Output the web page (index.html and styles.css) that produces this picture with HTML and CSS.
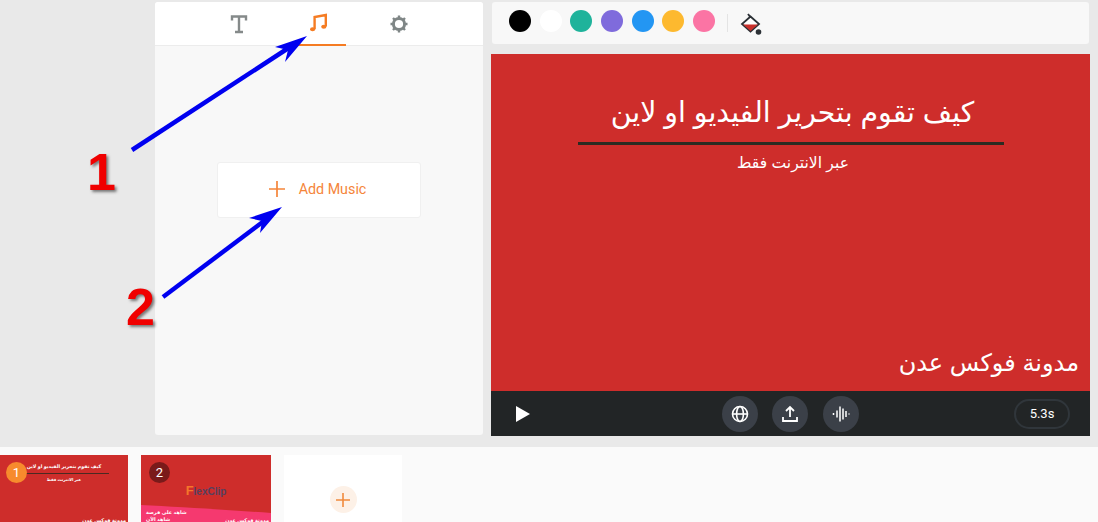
FILE: index.html
```html
<!DOCTYPE html>
<html lang="ar">
<head>
    <meta charset="UTF-8">
    <title>Add Music</title>
    <link rel="stylesheet" href="styles.css">
</head>
<body>
    <div class="app">
        <div class="main">
            <div class="panel">
                <div class="tabs">
                    <div class="tab">
                        <svg width="18" height="20" viewBox="0 0 18 20" fill="none" stroke="#858a8a" stroke-width="2.4"><path d="M2 6.5V2.5H16V6.5M9 2.5V18M5 18H13"/></svg>
                    </div>
                    <div class="tab active">
                        <svg width="20" height="20" viewBox="0 0 20 20" fill="none" stroke="#f57c23" stroke-width="2.4"><path d="M5.6 16V4L16.8 2V13.5"/><ellipse cx="3.6" cy="16.2" rx="2.6" ry="2" fill="#f57c23" stroke="none"/><ellipse cx="14.8" cy="13.8" rx="2.6" ry="2" fill="#f57c23" stroke="none"/></svg>
                    </div>
                    <div class="tab">
                        <svg width="20" height="20" viewBox="0 0 20 20" fill="none" stroke="#7f8686"><circle cx="10" cy="10" r="5.6" stroke-width="3"/><path d="M10 1.5V4M10 16V18.5M1.5 10H4M16 10H18.5M4 4L5.8 5.8M14.2 14.2L16 16M4 16L5.8 14.2M14.2 5.8L16 4" stroke-width="2.4"/></svg>
                    </div>
                </div>
                <div class="panel-body">
                    <div class="add-music">
                        <svg width="16" height="16" viewBox="0 0 16 16" stroke="#f5853a" stroke-width="1.7"><path d="M8 0V16M0 8H16"/></svg>
                        <span>Add Music</span>
                    </div>
                </div>
            </div>
            <div class="editor">
                <div class="toolbar">
                    <span class="swatch black"></span>
                    <span class="swatch white"></span>
                    <span class="swatch teal"></span>
                    <span class="swatch purple"></span>
                    <span class="swatch blue"></span>
                    <span class="swatch amber"></span>
                    <span class="swatch pink"></span>
                    <span class="divider"></span>
                    <svg class="bucket" width="22" height="24" viewBox="0 0 22 24"><path d="M8 2L11 6" stroke="#2c3136" stroke-width="1.8"/><path d="M10.5 4.5L19 12L10.5 19.5L2 12Z" fill="#fff" stroke="#2c3136" stroke-width="1.8"/><path d="M3 12.5H18L10.5 19Z" fill="#c9302c"/><circle cx="18.5" cy="20" r="2.8" fill="#2c3136"/></svg>
                </div>
                <div class="slide">
                    <div class="slide-title">كيف تقوم بتحرير الفيديو او لاين</div>
                    <div class="slide-line"></div>
                    <div class="slide-sub">عبر الانترنت فقط</div>
                    <div class="slide-foot">مدونة فوكس عدن</div>
                </div>
                <div class="controls">
                    <svg class="play" width="14" height="16" viewBox="0 0 14 16"><path d="M0 0L14 8L0 16Z" fill="#fff"/></svg>
                    <div class="round-btns">
                        <span class="round">
                            <svg width="18" height="18" viewBox="0 0 18 18" fill="none" stroke="#fff" stroke-width="1.6"><circle cx="9" cy="9" r="7.5"/><ellipse cx="9" cy="9" rx="3.4" ry="7.5"/><path d="M1.5 9H16.5"/></svg>
                        </span>
                        <span class="round">
                            <svg width="18" height="18" viewBox="0 0 18 18" fill="none" stroke="#fff" stroke-width="1.8"><path d="M9 12V2M5 6L9 2L13 6M2 12V16H16V12"/></svg>
                        </span>
                        <span class="round">
                            <svg width="18" height="18" viewBox="0 0 18 18" fill="none" stroke="#fff" stroke-width="1.5"><path d="M1.5 8V10M5 5.5V12.5M8 1.5V16.5M11 3.5V14.5M14 6V12M17 8.5V9.5"/></svg>
                        </span>
                    </div>
                    <span class="time">5.3s</span>
                </div>
            </div>
        </div>
        <div class="strip">
            <div class="thumb">
                <span class="badge orange">1</span>
                <div class="thumb-title">كيف تقوم بتحرير الفيديو او لاين</div>
                <div class="thumb-line"></div>
                <div class="thumb-sub">عبر الانترنت فقط</div>
                <div class="thumb-foot">مدونة فوكس عدن</div>
            </div>
            <div class="thumb second">
                <span class="badge dark">2</span>
                <div class="logo"><b>F</b>lexClip</div>
                <svg class="wave" width="130" height="17" viewBox="0 0 130 17"><path d="M0 0C40 2 90 5 130 8V17H0Z" fill="#f5396f"/></svg>
                <div class="wave-text">شاهد على فرصة<br>شاهد الآن</div>
                <div class="thumb-foot">مدونة فوكس عدن</div>
            </div>
            <div class="thumb add">
                <span class="add-circle">
                    <svg width="16" height="16" viewBox="0 0 16 16" stroke="#f08a3e" stroke-width="1.6"><path d="M8 1V15M1 8H15"/></svg>
                </span>
            </div>
        </div>

        <svg class="arrows" width="1098" height="522" viewBox="0 0 1098 522">
            <path d="M132 150L290 47" stroke="#0000f0" stroke-width="4.5" fill="none"/>
            <path d="M307 36L275 47L288 50L285 62Z" fill="#0000f0"/>
            <path d="M163 297L268 218" stroke="#0000f0" stroke-width="4.5" fill="none"/>
            <path d="M282 207L249 218L262 221L260 233Z" fill="#0000f0"/>
        </svg>
        <span class="num one">1</span>
        <span class="num two">2</span>
    </div>
</body>
</html>
```

FILE: styles.css
```css
*{
    box-sizing: border-box;
    margin: 0;
    padding: 0;
}
body{
    background-color: #e9e9e9;
    font-family: Roboto, "Liberation Sans", sans-serif;
}
.app{
    position: relative;
    width: 1098px;
    height: 522px;
    overflow: hidden;
}
.main{
    display: flex;
    gap: 8px;
    height: 447px;
    padding: 2px 0 0 155px;
}

/* left panel */
.panel{
    width: 328px;
    height: 433px;
    background-color: #f8f8f8;
    border-radius: 3px;
    display: flex;
    flex-direction: column;
}
.tabs{
    height: 44px;
    background-color: #fff;
    border-bottom: 1px solid #ececec;
    border-radius: 3px 3px 0 0;
    display: flex;
    justify-content: center;
    gap: 26px;
}
.tab{
    width: 54px;
    height: 44px;
    display: flex;
    align-items: center;
    justify-content: center;
}
.tab.active{
    border-bottom: 2px solid #f57c23;
}
.panel-body{
    flex: 1;
    padding-top: 116px;
}
.add-music{
    width: 204px;
    height: 56px;
    margin: auto;
    padding: 0 0 2px;
    background-color: #fff;
    border: 1px solid #f0f0f0;
    border-radius: 3px;
    display: flex;
    align-items: center;
    justify-content: center;
    gap: 14px;
    color: #f5853a;
    font-size: 14.3px;
}
.add-music svg{
    margin-left: -3px;
}

/* right side */
.editor{
    width: 599px;
    height: 434px;
    display: flex;
    flex-direction: column;
}
.toolbar{
    height: 42px;
    margin: 0 1px 10px;
    padding-left: 17px;
    background-color: #f8f8f8;
    border-radius: 3px;
    display: flex;
    align-items: center;
    gap: 8.7px;
}
.swatch{
    width: 22px;
    height: 22px;
    border-radius: 50%;
    margin-top: -4px;
}
.black{ background-color: #000; }
.white{ background-color: #fff; }
.teal{ background-color: #1fb39b; }
.purple{ background-color: #7f6bdc; }
.blue{ background-color: #2396f3; }
.amber{ background-color: #fdb92f; }
.pink{ background-color: #fb74a4; }
.divider{
    width: 1px;
    height: 18px;
    background-color: #e4e4e4;
    margin-left: 3px;
}
.bucket{
    margin-left: 3px;
    margin-top: 2px;
}
.slide{
    height: 337px;
    background-color: #ce2d2b;
    color: #fff;
    font-family: "Liberation Sans", "DejaVu Sans", sans-serif;
    display: flex;
    flex-direction: column;
    align-items: center;
    text-align: center;
}
.slide-title{
    margin-top: 40px;
    padding-left: 4px;
    font-size: 28.4px;
    line-height: 36px;
}
.slide-line{
    width: 426px;
    height: 3px;
    margin-top: 12px;
    background-color: #2b2b22;
}
.slide-sub{
    margin-top: 7px;
    padding-left: 5px;
    font-size: 15.6px;
    line-height: 22px;
}
.slide-foot{
    margin-top: auto;
    align-self: flex-end;
    padding: 0 11px 12px 0;
    font-size: 24px;
    line-height: 32px;
}
.controls{
    height: 45px;
    background-color: #222526;
    display: flex;
    align-items: center;
    padding: 0 20px 0 25px;
    justify-content: space-between;
}
.round-btns{
    display: flex;
    gap: 14.5px;
    margin-left: 36px;
}
.round{
    width: 36px;
    height: 36px;
    border-radius: 50%;
    background-color: #3b4048;
    display: flex;
    align-items: center;
    justify-content: center;
}
.time{
    width: 56px;
    height: 30px;
    border: 2px solid #30363b;
    border-radius: 15px;
    color: #fff;
    font-size: 13px;
    line-height: 26px;
    text-align: center;
}

/* bottom strip */
.strip{
    height: 75px;
    background-color: #fafafa;
    padding-top: 8px;
    display: flex;
    gap: 13px;
}
.thumb{
    position: relative;
    width: 128px;
    height: 67px;
    background-color: #ce2d2b;
    color: #fff;
    font-family: "Liberation Sans", "DejaVu Sans", sans-serif;
    overflow: hidden;
}
.thumb.second{
    width: 130px;
}
.thumb.add{
    width: 118px;
    background-color: #fff;
    padding-top: 31px;
    display: flex;
    align-items: flex-start;
    justify-content: center;
}
.add-circle{
    width: 27px;
    height: 27px;
    border-radius: 50%;
    background-color: #fdf1e7;
    display: flex;
    align-items: center;
    justify-content: center;
}
.badge{
    position: absolute;
    width: 21px;
    height: 21px;
    border-radius: 50%;
    top: 7px;
    left: 6px;
    font-family: Roboto, sans-serif;
    font-size: 13px;
    line-height: 21px;
    text-align: center;
    color: #fff;
}
.badge.orange{
    background-color: #f78b2d;
}
.badge.dark{
    background-color: #7a1a1a;
    left: 8px;
}
.thumb-title{
    font-size: 4.8px;
    font-weight: bold;
    line-height: 10px;
    text-align: center;
    padding-top: 7px;
}
.thumb-line{
    width: 90px;
    height: 1px;
    margin: 1px auto 0;
    background-color: #4a2a22;
}
.thumb-sub{
    font-size: 4px;
    font-weight: bold;
    line-height: 8px;
    text-align: center;
    padding-top: 2px;
}
.thumb-foot{
    position: absolute;
    right: 2px;
    bottom: -2px;
    font-size: 5px;
    font-weight: bold;
    line-height: 7px;
}
.logo{
    padding-top: 30px;
    text-align: center;
    font-size: 10px;
    line-height: 12px;
    font-weight: bold;
    color: #57405f;
}
.logo b{
    color: #f5762a;
    font-size: 13px;
}
.wave{
    position: absolute;
    left: 0;
    bottom: 0;
    height: 17px;
}
.wave-text{
    position: absolute;
    left: 5px;
    bottom: -1px;
    font-size: 5px;
    font-weight: bold;
    line-height: 7px;
}

/* annotations drawn over the screenshot */
.arrows{
    position: absolute;
    top: 0;
    left: 0;
    pointer-events: none;
}
.num{
    position: absolute;
    font-family: "Liberation Sans", sans-serif;
    font-weight: bold;
    font-size: 52px;
    line-height: 52px;
    color: #f00000;
    text-shadow: 2px 2px 3px #777;
}
.num.one{
    left: 87px;
    top: 146px;
}
.num.two{
    left: 126px;
    top: 281px;
}
```
